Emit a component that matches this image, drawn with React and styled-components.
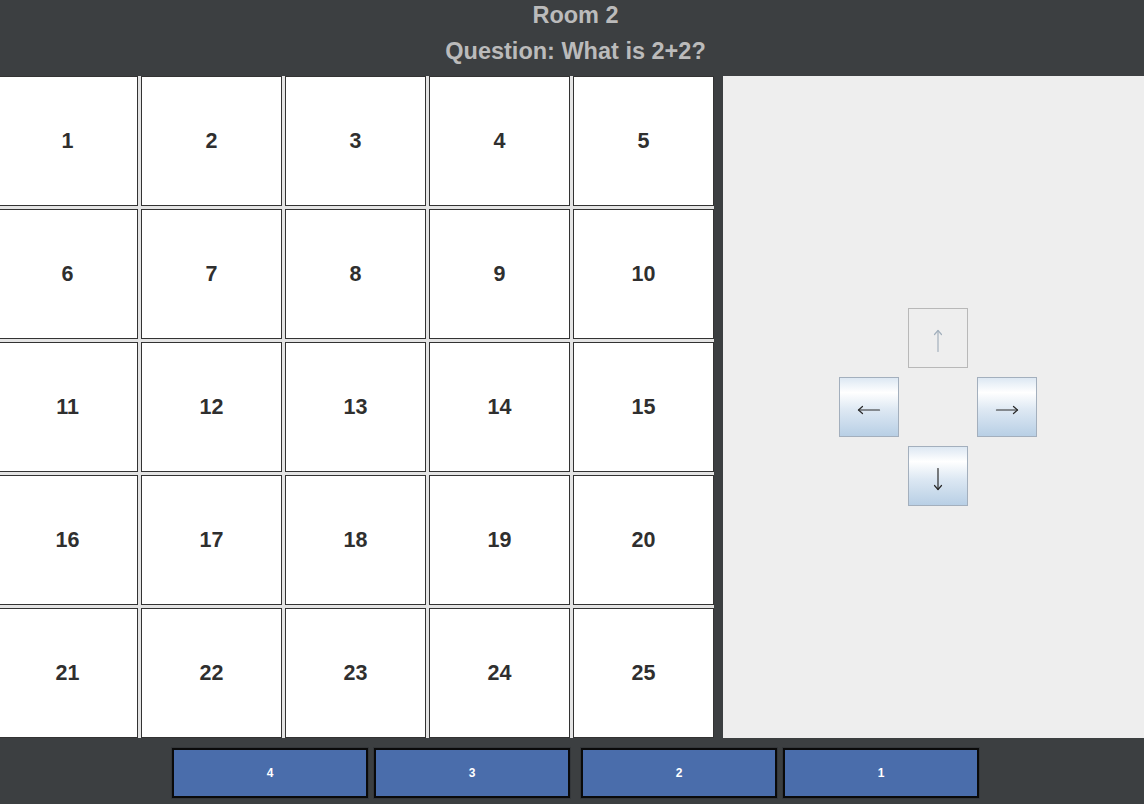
import React from "react";
import styled, { createGlobalStyle } from "styled-components";

const Global = createGlobalStyle`
  html, body { margin: 0; padding: 0; overflow: hidden; background: #3c3f41; }
  * { box-sizing: border-box; }
`;

const Frame = styled.div`
  width: 1144px;
  height: 804px;
  background: #3c3f41;
  display: flex;
  flex-direction: column;
  font-family: "Liberation Sans", Arial, sans-serif;
`;

const Header = styled.header`
  height: 76px;
  padding: 0 0 10px 7px;
  display: flex;
  flex-direction: column;
  gap: 6px;
  align-items: center;
`;

const Title = styled.div`
  height: 30px;
  line-height: 30px;
  font-size: 23.5px;
  font-weight: bold;
  color: #bbbbbb;
`;

const Main = styled.main`
  height: 662px;
  display: flex;
  gap: 9px;
`;

const BoardWrap = styled.div`
  width: 714px;
  height: 662px;
  overflow: hidden;
  background: #eeeeee;
`;

const Board = styled.div`
  margin-left: -3px;
  display: grid;
  grid-template-columns: repeat(5, 141px);
  grid-template-rows: repeat(5, 130px);
  gap: 3px;
  background: #e4e4e4;
`;

const Cell = styled.div`
  background: #ffffff;
  border: 1px solid #333333;
  display: flex;
  align-items: center;
  justify-content: center;
  font-size: 21.5px;
  font-weight: bold;
  color: #2f2f2f;
`;

const Side = styled.section`
  flex: 1;
  background: #eeeeee;
  display: flex;
  align-items: center;
  justify-content: center;
  padding-left: 8px;
`;

const Pad = styled.div`
  display: grid;
  grid-template-columns: repeat(3, 60px);
  grid-template-rows: repeat(3, 60px);
  gap: 9px;
`;

const ArrowButton = styled.button`
  grid-column: ${(p) => p.$col};
  grid-row: ${(p) => p.$row};
  width: 60px;
  height: 60px;
  padding: 5px 0 0 0;
  margin: 0;
  display: flex;
  align-items: center;
  justify-content: center;
  border: 1px solid ${(p) => (p.disabled ? "#b8b8b8" : "#a3afbd")};
  color: ${(p) => (p.disabled ? "#a3b0bd" : "#2a2a2a")};
  background: ${(p) =>
    p.disabled
      ? "#eeeeee"
      : "linear-gradient(to bottom, #dde8f3 0%, #ffffff 25%, #dde8f3 55%, #b8cfe5 100%)"};
`;

const ArrowIcon = styled.svg`
  width: 24px;
  height: 24px;
  display: block;
  transform: rotate(${(p) => p.$rot}deg);
`;

function Arrow({ rot }) {
  return (
    <ArrowIcon $rot={rot} viewBox="0 0 24 24" fill="none" stroke="currentColor" strokeWidth="1.2" strokeLinecap="round" strokeLinejoin="round">
      <path d="M1.5 12 H22.5" />
      <path d="M18.5 8.5 L22.5 12 L18.5 15.5" />
    </ArrowIcon>
  );
}

const Footer = styled.footer`
  height: 66px;
  padding: 10px 0 0 7px;
  display: flex;
  justify-content: center;
  gap: 11px;
`;

const Group = styled.div`
  display: flex;
  gap: 6px;
`;

const AnswerButton = styled.button`
  width: 196px;
  height: 50px;
  margin: 0;
  padding: 0;
  background: #4a6dab;
  border: 2px solid #0a0a0a;
  outline: 1px solid #34373a;
  color: #ffffff;
  font-family: "Liberation Sans", Arial, sans-serif;
  font-size: 12px;
  font-weight: bold;
`;

export default function App() {
  const cells = Array.from({ length: 25 }, (_, i) => i + 1);
  return (
    <Frame>
      <Global />
      <Header>
        <Title>Room 2</Title>
        <Title>Question: What is 2+2?</Title>
      </Header>
      <Main>
        <BoardWrap>
          <Board>
            {cells.map((n) => (
              <Cell key={n}>{n}</Cell>
            ))}
          </Board>
        </BoardWrap>
        <Side>
          <Pad>
            <ArrowButton $col={2} $row={1} disabled aria-label="up"><Arrow rot={-90} /></ArrowButton>
            <ArrowButton $col={1} $row={2} aria-label="left"><Arrow rot={180} /></ArrowButton>
            <ArrowButton $col={3} $row={2} aria-label="right"><Arrow rot={0} /></ArrowButton>
            <ArrowButton $col={2} $row={3} aria-label="down"><Arrow rot={90} /></ArrowButton>
          </Pad>
        </Side>
      </Main>
      <Footer>
        <Group>
          <AnswerButton>4</AnswerButton>
          <AnswerButton>3</AnswerButton>
        </Group>
        <Group>
          <AnswerButton>2</AnswerButton>
          <AnswerButton>1</AnswerButton>
        </Group>
      </Footer>
    </Frame>
  );
}
